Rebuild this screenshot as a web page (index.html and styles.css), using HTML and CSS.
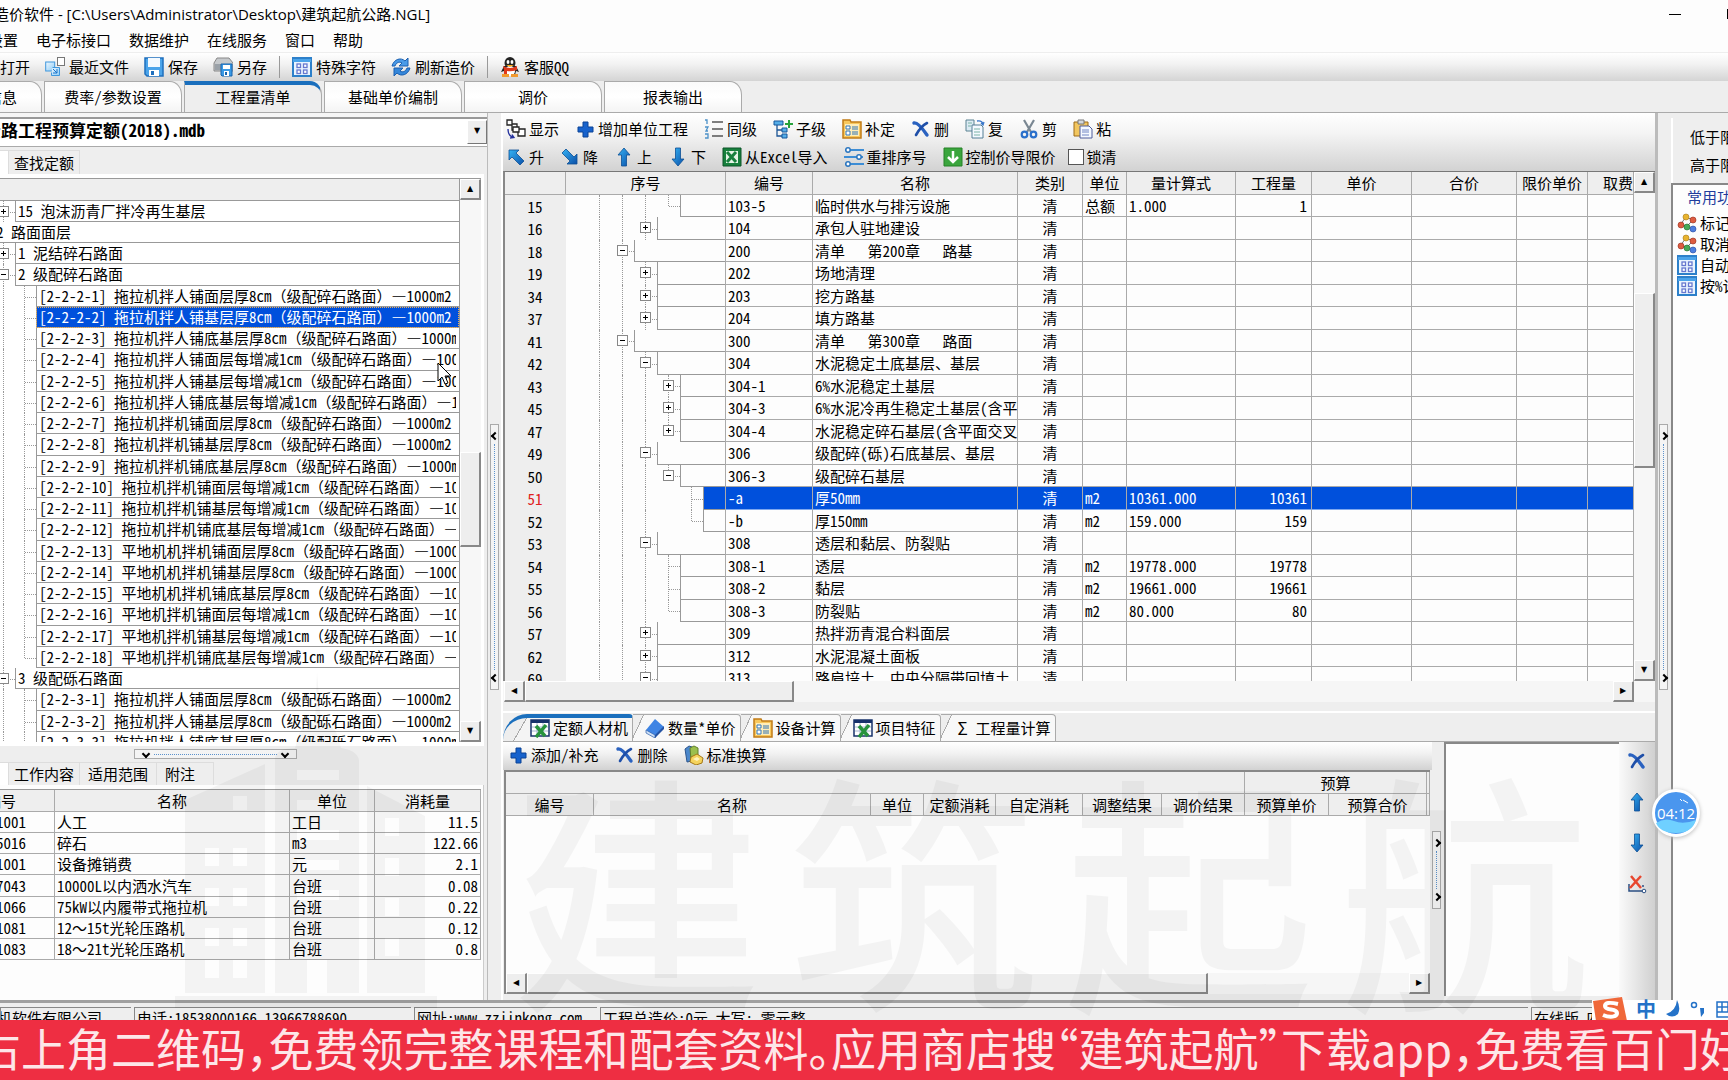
FILE: index.html
```html
<!DOCTYPE html>
<html lang="zh-CN">
<head>
<meta charset="utf-8">
<title>造价软件</title>
<link rel="stylesheet" href="styles.css">
</head>
<body>
<svg class="sprite" aria-hidden="true">
  <defs>
    <linearGradient id="blue" x1="0" y1="0" x2="1" y2="1"><stop offset="0" stop-color="#35b4f5"/><stop offset="1" stop-color="#0b4fa8"/></linearGradient>
    <linearGradient id="pale" x1="0" y1="0" x2="1" y2="1"><stop offset="0" stop-color="#eef8ff"/><stop offset="1" stop-color="#8ecbf5"/></linearGradient>
  </defs>
  <symbol id="recent" viewBox="0 0 20 20"><rect x="12.500" y=".5" width="7" height="8" fill="#fff" stroke="#777"/><rect x=".7" y="5" width="9" height="9" fill="url(#pale)" stroke="#3f97dd"/><path d="M7.500 10.500h7v8h-8v-3" fill="url(#pale)" stroke="#3f97dd"/><path d="M8 12l4 4m0-4v4h-4" stroke="#1a75cc" fill="none"/></symbol>
  <symbol id="save" viewBox="0 0 20 20"><path d="M1 1h18v18H3l-2-2z" fill="#4ba4ea" stroke="#1f6fbd" stroke-width="1.500"/><path d="M4 1h12v9H4z" fill="#f4faff"/><path d="M5 13h10v6H5z" fill="#fff"/><path d="M7 14h3v4H7z" fill="#1f6fbd"/></symbol>
  <symbol id="saveas" viewBox="0 0 20 20"><path d="M4 1h12l4 5v8H1V6z" fill="#c6c9cc" stroke="#888"/><path d="M2 7h16v6H2z" fill="#9aa1a8"/><path d="M8 7h11v12H9l-1-1z" fill="#3a9ae6" stroke="#1763ad"/><path d="M10 8h7v4h-7zM11 14h5v5h-5z" fill="#fff"/><path d="M12 15h2v3h-2z" fill="#1763ad"/></symbol>
  <symbol id="grid" viewBox="0 0 20 20"><path d="M1 1h18v18H1z" fill="#eaf5ff" stroke="#2d80ca" stroke-width="2"/><path d="M1 2h18v3H1z" fill="#4ba4ea"/><g fill="#fff" stroke="#6678cf" stroke-width="1.300"><rect x="5" y="7" width="3.500" height="3.500"/><rect x="11.500" y="7" width="3.500" height="3.500"/><rect x="5" y="13" width="3.500" height="3.500"/><rect x="11.500" y="13" width="3.500" height="3.500"/></g></symbol>
  <symbol id="refresh" viewBox="0 0 20 20"><path d="M1 9C3 2 10 0 14 4l3-3v8H8l3-3C8 4 5 6 4 9z" fill="#4a9be8" stroke="#1a5fb0"/><path d="M19 11c-2 7-9 9-13 5l-3 3v-8h9l-3 3c3 2 6 0 7-3z" fill="#3587da" stroke="#1a5fb0"/></symbol>
  <symbol id="qq" viewBox="0 0 20 20"><ellipse cx="10" cy="6" rx="5.500" ry="6" fill="#222"/><path d="M4 9L1 15l3-1 1 4h10l1-4 3 1-3-6z" fill="#222"/><ellipse cx="10" cy="14" rx="5" ry="5" fill="#fff"/><ellipse cx="8" cy="5" rx="1.400" ry="2" fill="#fff"/><ellipse cx="12" cy="5" rx="1.400" ry="2" fill="#fff"/><path d="M6 8h8l-4 2z" fill="#f7a614"/><path d="M3 9q7 4 14 0v4q-6 2-10 1v3H4v-4z" fill="#df3a1c"/><path d="M2 17h7v3H2zm9 0h7v3h-7z" fill="#f29a2e"/></symbol>
  <symbol id="show" viewBox="0 0 20 20"><g fill="#fff" stroke="#222" stroke-width="1.300"><path d="M1 1h5v5H1zM6 5h5v6H6zM12 10h7v7h-7z"/><path d="M7 8h6v5H7z"/></g><path d="M2 10q0 7 5 8m-3 1l4-.5-2-3" fill="none" stroke="#24319c" stroke-width="1.300"/></symbol>
  <symbol id="plus" viewBox="0 0 20 20"><path d="M8 3h5v5h5v5h-5v5H8v-5H3V8h5z" fill="#1762cc" stroke="#0a4296"/></symbol>
  <symbol id="list" viewBox="0 0 20 20"><path d="M8 3h11M8 10h11M8 17h11" stroke="#555" stroke-width="1.500"/><path d="M1 1h2v4M1 8h3L2 12h2M1 15h3v4H1" fill="none" stroke="#4c91c8" stroke-width="1.300"/></symbol>
  <symbol id="tree" viewBox="0 0 20 20"><path d="M4 5v12h7M4 11h7" fill="none" stroke="#1d5696" stroke-width="1.300"/><g fill="#55aee8" stroke="#17579b"><path d="M1 2h9v4H1zM9 9h5v4H9zM9 15h5v4H9z"/></g><path d="M15 1h2v3h3v2h-3v3h-2V6h-3V4h3z" fill="#28a23c"/></symbol>
  <symbol id="folder" viewBox="0 0 20 20"><path d="M1 1h7l1 2h10v16H1z" fill="#f8c85d" stroke="#c17b16" stroke-width="1.500"/><path d="M3 5h14v12H3z" fill="#ffedb8"/><path d="M4 7h4v3H4zm0 5h4v4H4z" fill="#fff" stroke="#3175b5"/><path d="M10 8h6m-6 2h6m-6 3h6m-6 2h6" stroke="#3175b5"/></symbol>
  <symbol id="del" viewBox="0 0 20 20"><path d="M3 4q4-1 13 12" fill="none" stroke="#2a62c0" stroke-width="3.400" stroke-linecap="round"/><path d="M16 4Q10 7 5 16" fill="none" stroke="#1f4fa8" stroke-width="2.600" stroke-linecap="round"/></symbol>
  <symbol id="copy" viewBox="0 0 20 20"><path d="M1 1h8v11H1z" fill="#dcebf4" stroke="#5b8292"/><path d="M7 6h9l2 2v11H7z" fill="#f4f9ff" stroke="#557f96"/><path d="M9 10h6m-6 3h6m-6 3h6M3 4h4M3 7h3" stroke="#7bb3a6"/><path d="M12 2q5-1 6 3m-2-1l2 2 1-3" fill="none" stroke="#3a78cb" stroke-width="1.300"/></symbol>
  <symbol id="cut" viewBox="0 0 20 20"><path d="M5 1l7 12M15 1L8 13" stroke="#7a8792" stroke-width="2.200"/><g fill="none" stroke="#2a70cb" stroke-width="2.200"><circle cx="5.500" cy="15.500" r="2.800"/><circle cx="14.500" cy="15.500" r="2.800"/></g></symbol>
  <symbol id="paste" viewBox="0 0 20 20"><path d="M1 3h14v14H1z" fill="#f2c65f" stroke="#9c6b19"/><path d="M5 1h6v4H5z" fill="#d4d8dc" stroke="#777"/><path d="M7 7h9l3 3v9H7z" fill="#f5f9ff" stroke="#4e5d9c"/><path d="M9 11h7m-7 2h7m-7 3h7" stroke="#7185c4"/></symbol>
  <symbol id="up" viewBox="0 0 20 20"><path d="M10 1l6 7h-3.500v11h-5V8H4z" fill="url(#blue)" stroke="#0c4f94" stroke-width=".8"/></symbol>
  <symbol id="down" viewBox="0 0 20 20"><path d="M10 19l6-7h-3.500V1h-5v11H4z" fill="url(#blue)" stroke="#0c4f94" stroke-width=".8"/></symbol>
  <symbol id="upleft" viewBox="0 0 20 20"><path d="M3 3h10L10 6l8 8-4 4-8-8-3 3z" fill="url(#blue)" stroke="#0c4f94" stroke-width=".8"/></symbol>
  <symbol id="downright" viewBox="0 0 20 20"><path d="M17 17H7l3-3-8-8 4-4 8 8 3-3z" fill="url(#blue)" stroke="#0c4f94" stroke-width=".8"/></symbol>
  <symbol id="excel" viewBox="0 0 20 20"><path d="M1 1h18v18H1z" fill="#17803d" stroke="#0d5528"/><path d="M4 4h12v12H4z" fill="#e4f4e6"/><path d="M5 5l9 10M14 5L5 15" stroke="#17803d" stroke-width="3"/></symbol>
  <symbol id="sheet" viewBox="0 0 20 20"><path d="M1 2h18v16H1z" fill="#fff" stroke="#17326b" stroke-width="1.500"/><path d="M1 2h18v3H1z" fill="#17326b"/><path d="M2 9h16M2 13h16M7 5v13M13 5v13" stroke="#a5b6cf"/><path d="M6 8l9 10M16 7L6 19" stroke="#27933c" stroke-width="3.500"/></symbol>
  <symbol id="sliders" viewBox="0 0 20 20"><path d="M1 3h19M0 10h19M1 17h19" stroke="#3d8dd5" stroke-width="2"/><g fill="#fff" stroke="#2b76bf" stroke-width="1.500"><circle cx="4" cy="3" r="2.200"/><circle cx="15" cy="10" r="2.200"/><circle cx="4" cy="17" r="2.200"/></g></symbol>
  <symbol id="green" viewBox="0 0 20 20"><path d="M1 1h18v18H1z" fill="#3aa53d" stroke="#248127"/><path d="M10 4v11M5 10l5 5 5-5" fill="none" stroke="#fff" stroke-width="2.500"/></symbol>
  <symbol id="book" viewBox="0 0 20 20"><path d="M1 12L10 1l9 8-9 11z" fill="#3e84e4"/><path d="M1 12v3l9 5v-3z" fill="#cfe0f6" stroke="#2b5eab" stroke-width=".7"/><path d="M10 17l9-9v3l-9 9z" fill="#2453a3"/></symbol>
  <symbol id="convert" viewBox="0 0 20 20"><path d="M1 4l4-3 3 1v14l-5 1z" fill="#4b87cb" stroke="#2d568e"/><path d="M6 3l4-2 4 2v12H7z" fill="#9bbf4d" stroke="#62802a"/><path d="M7 12l6-3 6 4-1 5-6 2-6-3z" fill="#f5d35c" stroke="#a47819"/><path d="M9 14l4-2 3 2-3 2z" fill="#fff3ba"/></symbol>
  <symbol id="redx" viewBox="0 0 20 20"><path d="M2 10v7h14m0-6v2" fill="none" stroke="#2b4f83" stroke-width="1.500"/><path d="M4 2l10 12M14 2L3 14" stroke="#e8472f" stroke-width="2.500"/><circle cx="17" cy="17" r="1.800" fill="#fff" stroke="#2b4f83"/></symbol>
  <symbol id="balls" viewBox="0 0 20 20"><path d="M9 4l7 3-6 6-7-1z" fill="none" stroke="#777"/><circle cx="9" cy="4" r="3" fill="#e8b32d" stroke="#a87b14" stroke-width=".6"/><circle cx="16" cy="7" r="3" fill="#dd5c41" stroke="#962a18" stroke-width=".6"/><circle cx="4" cy="12" r="3" fill="#dd5c41" stroke="#962a18" stroke-width=".6"/><circle cx="10" cy="14" r="3" fill="#47a957" stroke="#1d6b2a" stroke-width=".6"/><circle cx="16" cy="16" r="3" fill="#4c7ee0" stroke="#25479c" stroke-width=".6"/></symbol>
</svg>

<header>
  <div class="title"><span>造价软件 - [C:\Users\Administrator\Desktop\建筑起航公路.NGL]</span>
    <button class="min" aria-label="最小化"></button><button class="max" aria-label="最大化"></button></div>
  <nav class="menu"><button>设置</button><button>电子标接口</button><button>数据维护</button><button>在线服务</button><button>窗口</button><button>帮助</button></nav>
  <div class="toolbar">
    <button>打开</button>
    <button><svg><use href="#recent"/></svg>最近文件</button>
    <button><svg><use href="#save"/></svg>保存</button>
    <button><svg><use href="#saveas"/></svg>另存</button>
    <hr>
    <button><svg><use href="#grid"/></svg>特殊字符</button>
    <button><svg><use href="#refresh"/></svg>刷新造价</button>
    <hr>
    <button><svg><use href="#qq"/></svg>客服QQ</button>
  </div>
  <nav class="tabs"><button>项目信息</button><button>费率/参数设置</button><button class="on">工程量清单</button><button>基础单价编制</button><button>调价</button><button>报表输出</button></nav>
</header>

<main class="work">
  <section class="left">
    <div class="combo"><select aria-label="定额库"><option>公路工程预算定额(2018).mdb</option></select></div>
    <div class="subtabs find"><button class="on" aria-label="定额"></button><button>查找定额</button></div>
    <div class="treebox">
      <div class="treemain">
        <div class="treehead"></div>
        <ul class="quota">
          <li><i class="j"><button class="box plus" aria-label="展开"></button></i><span class="leaf"><span>15 泡沫沥青厂拌冷再生基层</span></span></li>
          <li class="root"><span class="leaf"><span>2 路面面层</span></span></li>
          <li><i class="j"><button class="box plus" aria-label="展开"></button></i><span class="leaf"><span>1 泥结碎石路面</span></span></li>
          <li><i class="j"><button class="box" aria-label="折叠"></button></i><span class="leaf"><span>2 级配碎石路面</span></span></li>
          <li><i class="g"></i><i class="j"></i><span class="leaf"><span>[2-2-2-1] 拖拉机拌人铺面层厚8cm<em>（级配碎石路面）—</em>1000m2</span></span></li>
          <li class="sel"><i class="g"></i><i class="j"></i><span class="leaf"><span>[2-2-2-2] 拖拉机拌人铺基层厚8cm<em>（级配碎石路面）—</em>1000m2</span></span></li>
          <li><i class="g"></i><i class="j"></i><span class="leaf"><span>[2-2-2-3] 拖拉机拌人铺底基层厚8cm<em>（级配碎石路面）—</em>1000m2</span></span></li>
          <li><i class="g"></i><i class="j"></i><span class="leaf"><span>[2-2-2-4] 拖拉机拌人铺面层每增减1cm<em>（级配碎石路面）—</em>1000m2</span></span></li>
          <li><i class="g"></i><i class="j"></i><span class="leaf"><span>[2-2-2-5] 拖拉机拌人铺基层每增减1cm<em>（级配碎石路面）—</em>1000m2</span></span></li>
          <li><i class="g"></i><i class="j"></i><span class="leaf"><span>[2-2-2-6] 拖拉机拌人铺底基层每增减1cm<em>（级配碎石路面）—</em>1000m2</span></span></li>
          <li><i class="g"></i><i class="j"></i><span class="leaf"><span>[2-2-2-7] 拖拉机拌机铺面层厚8cm<em>（级配碎石路面）—</em>1000m2</span></span></li>
          <li><i class="g"></i><i class="j"></i><span class="leaf"><span>[2-2-2-8] 拖拉机拌机铺基层厚8cm<em>（级配碎石路面）—</em>1000m2</span></span></li>
          <li><i class="g"></i><i class="j"></i><span class="leaf"><span>[2-2-2-9] 拖拉机拌机铺底基层厚8cm<em>（级配碎石路面）—</em>1000m2</span></span></li>
          <li><i class="g"></i><i class="j"></i><span class="leaf"><span>[2-2-2-10] 拖拉机拌机铺面层每增减1cm<em>（级配碎石路面）—</em>1000m2</span></span></li>
          <li><i class="g"></i><i class="j"></i><span class="leaf"><span>[2-2-2-11] 拖拉机拌机铺基层每增减1cm<em>（级配碎石路面）—</em>1000m2</span></span></li>
          <li><i class="g"></i><i class="j"></i><span class="leaf"><span>[2-2-2-12] 拖拉机拌机铺底基层每增减1cm<em>（级配碎石路面）—</em>1000m2</span></span></li>
          <li><i class="g"></i><i class="j"></i><span class="leaf"><span>[2-2-2-13] 平地机机拌机铺面层厚8cm<em>（级配碎石路面）—</em>1000m2</span></span></li>
          <li><i class="g"></i><i class="j"></i><span class="leaf"><span>[2-2-2-14] 平地机机拌机铺基层厚8cm<em>（级配碎石路面）—</em>1000m2</span></span></li>
          <li><i class="g"></i><i class="j"></i><span class="leaf"><span>[2-2-2-15] 平地机机拌机铺底基层厚8cm<em>（级配碎石路面）—</em>1000m2</span></span></li>
          <li><i class="g"></i><i class="j"></i><span class="leaf"><span>[2-2-2-16] 平地机拌机铺面层每增减1cm<em>（级配碎石路面）—</em>1000m2</span></span></li>
          <li><i class="g"></i><i class="j"></i><span class="leaf"><span>[2-2-2-17] 平地机拌机铺基层每增减1cm<em>（级配碎石路面）—</em>1000m2</span></span></li>
          <li><i class="g"></i><i class="j end"></i><span class="leaf"><span>[2-2-2-18] 平地机拌机铺底基层每增减1cm<em>（级配碎石路面）—</em>1000m2</span></span></li>
          <li><i class="j"><button class="box" aria-label="折叠"></button></i><span class="leaf"><span>3 级配砾石路面</span></span></li>
          <li><i class="g"></i><i class="j"></i><span class="leaf"><span>[2-2-3-1] 拖拉机拌人铺面层厚8cm<em>（级配砾石路面）—</em>1000m2</span></span></li>
          <li><i class="g"></i><i class="j"></i><span class="leaf"><span>[2-2-3-2] 拖拉机拌人铺基层厚8cm<em>（级配砾石路面）—</em>1000m2</span></span></li>
          <li><i class="g"></i><i class="j"></i><span class="leaf"><span>[2-2-3-3] 拖拉机拌人铺底基层厚8cm<em>（级配砾石路面）—</em>1000m2</span></span></li>
        </ul>
      </div>
      <div class="vscroll quotabar"><button class="arr" aria-label="向上">▲</button><i class="thumb"></i><button class="arr" aria-label="向下">▼</button></div>
    </div>
    <div class="hsplit"><button class="grip" aria-label="折叠面板"><i class="chev d"></i><i class="dots"></i><i class="chev d"></i></button></div>
    <div class="subtabs"><button class="on" aria-label="消耗量"></button><button>工作内容</button><button>适用范围</button><button class="wide">附注</button></div>
    <div class="usagebox">
      <table class="usage">
        <colgroup><col class="u1"><col><col class="u3"><col class="u4"></colgroup>
        <thead><tr><th>编号</th><th>名称</th><th>单位</th><th>消耗量</th></tr></thead>
        <tbody>
          <tr><td>1001</td><td>人工</td><td>工日</td><td>11.5</td></tr>
          <tr><td>5016</td><td>碎石</td><td>m3</td><td>122.66</td></tr>
          <tr><td>1001</td><td>设备摊销费</td><td>元</td><td>2.1</td></tr>
          <tr><td>7043</td><td>10000L以内洒水汽车</td><td>台班</td><td>0.08</td></tr>
          <tr><td>1066</td><td>75kW以内履带式拖拉机</td><td>台班</td><td>0.22</td></tr>
          <tr><td>1081</td><td>12<em>～</em>15t光轮压路机</td><td>台班</td><td>0.12</td></tr>
          <tr><td>1083</td><td>18<em>～</em>21t光轮压路机</td><td>台班</td><td>0.8</td></tr>
        </tbody>
      </table>
    </div>
  </section>

  <div class="vsplit"><button class="grip" aria-label="折叠左侧"><i class="chev l"></i><i class="dots"></i><i class="chev l"></i></button></div>

  <section class="center">
    <div class="tools">
      <div>
        <button><svg><use href="#show"/></svg>显示</button><button><svg><use href="#plus"/></svg>增加单位工程</button><button><svg><use href="#list"/></svg>同级</button><button><svg><use href="#tree"/></svg>子级</button><button><svg><use href="#folder"/></svg>补定</button><button><svg><use href="#del"/></svg>删</button><button><svg><use href="#copy"/></svg>复</button><button><svg><use href="#cut"/></svg>剪</button><button><svg><use href="#paste"/></svg>粘</button>
      </div>
      <div>
        <button><svg><use href="#upleft"/></svg>升</button><button><svg><use href="#downright"/></svg>降</button><button><svg><use href="#up"/></svg>上</button><button><svg><use href="#down"/></svg>下</button><button><svg><use href="#excel"/></svg>从Excel导入</button><button><svg><use href="#sliders"/></svg>重排序号</button><button><svg><use href="#green"/></svg>控制价导限价</button><label><input type="checkbox">锁清</label>
      </div>
    </div>
    <div class="gridbox">
      <div class="gridclip">
      <table class="bill">
        <colgroup><col class="c0"><col class="c1"><col class="c2"><col class="c3"><col class="c4"><col class="c5"><col class="c6"><col class="c7"><col class="c8"><col class="c9"><col class="c10"><col></colgroup>
        <thead><tr><th></th><th>序号</th><th>编号</th><th>名称</th><th>类别</th><th>单位</th><th>量计算式</th><th>工程量</th><th>单价</th><th>合价</th><th>限价单价</th><th class="fee">取费</th></tr></thead>
        <tbody>
          <tr><td>15<td><div class="tree"><i class="g"></i><i class="g"></i><i class="g"></i><i class="j end"></i><i class="leaf"></i></div><td>103-5<td>临时供水与排污设施<td>清<td>总额<td>1.000<td>1<td><td><td><td></tr>
          <tr><td>16<td><div class="tree"><i class="g"></i><i class="g"></i><i class="j"><button class="box plus" aria-label="展开"></button></i><i class="leaf"></i></div><td>104<td>承包人驻地建设<td>清<td><td><td><td><td><td><td></tr>
          <tr><td>18<td><div class="tree"><i class="g"></i><i class="j"><button class="box" aria-label="折叠"></button></i><i class="leaf"></i></div><td>200<td>清单&nbsp;&nbsp;&nbsp;第200章&nbsp;&nbsp;&nbsp;路基<td>清<td><td><td><td><td><td><td></tr>
          <tr><td>19<td><div class="tree"><i class="g"></i><i class="g"></i><i class="j"><button class="box plus" aria-label="展开"></button></i><i class="leaf"></i></div><td>202<td>场地清理<td>清<td><td><td><td><td><td><td></tr>
          <tr><td>34<td><div class="tree"><i class="g"></i><i class="g"></i><i class="j"><button class="box plus" aria-label="展开"></button></i><i class="leaf"></i></div><td>203<td>挖方路基<td>清<td><td><td><td><td><td><td></tr>
          <tr><td>37<td><div class="tree"><i class="g"></i><i class="g"></i><i class="j"><button class="box plus" aria-label="展开"></button></i><i class="leaf"></i></div><td>204<td>填方路基<td>清<td><td><td><td><td><td><td></tr>
          <tr><td>41<td><div class="tree"><i class="g"></i><i class="j"><button class="box" aria-label="折叠"></button></i><i class="leaf"></i></div><td>300<td>清单&nbsp;&nbsp;&nbsp;第300章&nbsp;&nbsp;&nbsp;路面<td>清<td><td><td><td><td><td><td></tr>
          <tr><td>42<td><div class="tree"><i class="g"></i><i class="g"></i><i class="j"><button class="box" aria-label="折叠"></button></i><i class="leaf"></i></div><td>304<td>水泥稳定土底基层、基层<td>清<td><td><td><td><td><td><td></tr>
          <tr><td>43<td><div class="tree"><i class="g"></i><i class="g"></i><i class="g"></i><i class="j"><button class="box plus" aria-label="展开"></button></i><i class="leaf"></i></div><td>304-1<td>6%水泥稳定土基层<td>清<td><td><td><td><td><td><td></tr>
          <tr><td>45<td><div class="tree"><i class="g"></i><i class="g"></i><i class="g"></i><i class="j"><button class="box plus" aria-label="展开"></button></i><i class="leaf"></i></div><td>304-3<td>6%水泥冷再生稳定土基层(含平<td>清<td><td><td><td><td><td><td></tr>
          <tr><td>47<td><div class="tree"><i class="g"></i><i class="g"></i><i class="g"></i><i class="j end"><button class="box plus" aria-label="展开"></button></i><i class="leaf"></i></div><td>304-4<td>水泥稳定碎石基层(含平面交叉<td>清<td><td><td><td><td><td><td></tr>
          <tr><td>49<td><div class="tree"><i class="g"></i><i class="g"></i><i class="j"><button class="box" aria-label="折叠"></button></i><i class="leaf"></i></div><td>306<td>级配碎(砾)石底基层、基层<td>清<td><td><td><td><td><td><td></tr>
          <tr><td>50<td><div class="tree"><i class="g"></i><i class="g"></i><i class="g"></i><i class="j end"><button class="box" aria-label="折叠"></button></i><i class="leaf"></i></div><td>306-3<td>级配碎石基层<td>清<td><td><td><td><td><td><td></tr>
          <tr class="sel"><td>51<td><div class="tree"><i class="g"></i><i class="g"></i><i class="g"></i><i class="g none"></i><i class="j"></i><i class="leaf"></i></div><td>-a<td>厚50mm<td>清<td>m2<td>10361.000<td>10361<td><td><td><td></tr>
          <tr><td>52<td><div class="tree"><i class="g"></i><i class="g"></i><i class="g"></i><i class="g none"></i><i class="j end"></i><i class="leaf"></i></div><td>-b<td>厚150mm<td>清<td>m2<td>159.000<td>159<td><td><td><td></tr>
          <tr><td>53<td><div class="tree"><i class="g"></i><i class="g"></i><i class="j"><button class="box" aria-label="折叠"></button></i><i class="leaf"></i></div><td>308<td>透层和黏层、防裂贴<td>清<td><td><td><td><td><td><td></tr>
          <tr><td>54<td><div class="tree"><i class="g"></i><i class="g"></i><i class="g"></i><i class="j"></i><i class="leaf"></i></div><td>308-1<td>透层<td>清<td>m2<td>19778.000<td>19778<td><td><td><td></tr>
          <tr><td>55<td><div class="tree"><i class="g"></i><i class="g"></i><i class="g"></i><i class="j"></i><i class="leaf"></i></div><td>308-2<td>黏层<td>清<td>m2<td>19661.000<td>19661<td><td><td><td></tr>
          <tr><td>56<td><div class="tree"><i class="g"></i><i class="g"></i><i class="g"></i><i class="j end"></i><i class="leaf"></i></div><td>308-3<td>防裂贴<td>清<td>m2<td>80.000<td>80<td><td><td><td></tr>
          <tr><td>57<td><div class="tree"><i class="g"></i><i class="g"></i><i class="j"><button class="box plus" aria-label="展开"></button></i><i class="leaf"></i></div><td>309<td>热拌沥青混合料面层<td>清<td><td><td><td><td><td><td></tr>
          <tr><td>62<td><div class="tree"><i class="g"></i><i class="g"></i><i class="j"><button class="box plus" aria-label="展开"></button></i><i class="leaf"></i></div><td>312<td>水泥混凝土面板<td>清<td><td><td><td><td><td><td></tr>
          <tr><td>69<td><div class="tree"><i class="g"></i><i class="g"></i><i class="j"><button class="box" aria-label="折叠"></button></i><i class="leaf"></i></div><td>313<td>路肩培土、中央分隔带回填土<td>清<td><td><td><td><td><td><td></tr>
        </tbody>
      </table>
      </div>
      <div class="vscroll billbar"><button class="arr" aria-label="向上">▲</button><i class="thumb"></i><button class="arr" aria-label="向下">▼</button></div>
    </div>
    <div class="hscroll wide"><button class="arr" aria-label="向左">◀</button><i class="thumb"></i><button class="arr" aria-label="向右">▶</button></div>

    <div class="detail">
      <nav class="dtabs">
        <button class="on"><svg><use href="#sheet"/></svg>定额人材机</button><button><svg><use href="#book"/></svg>数量*单价</button><button><svg><use href="#folder"/></svg>设备计算</button><button><svg><use href="#sheet"/></svg>项目特征</button><button><span class="sigma">Σ</span>工程量计算</button>
      </nav>
      <div class="drow">
        <div class="dmain">
          <div class="dtools"><button><svg><use href="#plus"/></svg>添加/补充</button><button><svg><use href="#del"/></svg>删除</button><button><svg><use href="#convert"/></svg>标准换算</button></div>
          <div class="dgrid">
            <table class="labor">
              <colgroup><col class="l1"><col><col class="l3"><col class="l4"><col class="l5"><col class="l6"><col class="l7"><col class="l8"><col class="l9"><col class="l10"></colgroup>
              <thead>
                <tr><th colspan="7"></th><th colspan="2">预算</th><th></th></tr>
                <tr><th>编号</th><th>名称</th><th>单位</th><th>定额消耗</th><th>自定消耗</th><th>调整结果</th><th>调价结果</th><th>预算单价</th><th>预算合价</th><th></th></tr>
              </thead>
            </table>
            <div class="hscroll"><button class="arr" aria-label="向左">◀</button><i class="thumb"></i><button class="arr" aria-label="向右">▶</button></div>
          </div>
        </div>
        <div class="dsplit"><button class="grip" aria-label="折叠右侧"><i class="chev r"></i><i class="dots"></i><i class="chev r"></i></button></div>
        <div class="note"></div>
        <div class="sidetools"><button aria-label="删除"><svg><use href="#del"/></svg></button><button aria-label="上移"><svg><use href="#up"/></svg></button><button aria-label="下移"><svg><use href="#down"/></svg></button><button aria-label="清除"><svg><use href="#redx"/></svg></button></div>
      </div>
    </div>
  </section>

  <div class="vsplit rightsplit"><button class="grip" aria-label="折叠右侧"><i class="chev r"></i><i class="dots"></i><i class="chev r"></i></button></div>

  <aside class="right">
    <div class="limits"><p>低于限价</p><p>高于限价</p></div>
    <div class="common">
      <h2>常用功能</h2>
      <button><svg><use href="#balls"/></svg>标记</button>
      <button><svg><use href="#balls"/></svg>取消</button>
      <button><svg><use href="#grid"/></svg>自动</button>
      <button><svg><use href="#grid"/></svg>按%计</button>
    </div>
  </aside>
</main>

<footer class="status"><span class="s1">机软件有限公司</span><span class="s2">电话:18538000166 13966788690</span><span class="s3">网址:www.zzjinkong.com</span><span class="s4">工程总造价:0元 大写: 零元整</span><span class="s5">在线版 四</span></footer>
<div class="banner">右上角二维码，免费领完整课程和配套资料。应用商店搜“建筑起航”下载app，免费看百门好课</div>

<div class="mark" aria-hidden="true">
  <svg viewBox="0 0 265 270"><path fill-rule="evenodd" d="M10 255V62l80-36v229zM100 255V20q2-10 20-10l4-14q4-10 16-12l2-50 4 50q12 2 16 12l4 14q16 2 18 12v233zM192 255V48l58 30v177zM30 110h14v18H30zM58 110h14v18H58zM58 58h14v14H58zM30 150h14v18H30zM58 150h14v18H58zM30 190h14v18H30zM58 190h14v18H58zM30 222h14v18H30zM58 222h14v18H58zM122 32h42v10h-42zM122 62h42v10h-42zM122 92h42v10h-42zM122 122h42v10h-42zM122 152h42v10h-42zM132 222h20v33h-20zM210 80h14v18h-14zM210 120h14v18h-14zM210 160h14v18h-14zM210 200h14v18h-14zM0 258h262v12H0z"/></svg>
  <span>建</span><span>筑</span><span>起</span><span>航</span>
</div>
<div class="timer">04:12<svg viewBox="0 0 42 42"><path d="M1 31q9-6 18-2t22-1q-4 13-20 13T1 31z" fill="#6fd0ff"/><path d="M25 7l2 2m1-1l5 3" stroke="#fff" fill="none"/></svg></div>
<div class="ime"><svg class="logo" viewBox="0 0 36 24"><path d="M1 4l29-4 5 24H4z" fill="#f0683a"/><path d="M26 7q-13-3-13 2c0 5 12 2 12 7 0 4-7 5-14 2" fill="none" stroke="#fff" stroke-width="4"/></svg><span>中</span><svg viewBox="0 0 18 20"><path d="M13 1q-1 11-11 14 6 5 12 0 3-6-1-14z" fill="#2472c8"/></svg><svg viewBox="0 0 18 20"><circle cx="4" cy="6" r="2.500" fill="none" stroke="#2472c8" stroke-width="1.500"/><path d="M10 9h4v5l-3 4" fill="#2472c8"/></svg><svg viewBox="0 0 18 20"><path d="M1 3h16v15H1zM1 8h16M6 3v10M12 3v10M1 13h16" fill="none" stroke="#2472c8" stroke-width="1.500"/></svg></div>
<svg class="cursor" viewBox="0 0 16 24" aria-hidden="true"><path d="M1 1v18l4-4 3 7 3-1-3-7h6z" fill="#fff" stroke="#000"/></svg>
</body>
</html>
```

FILE: styles.css
```css
* { box-sizing: border-box; }
body {
  margin: 0;
  min-height: 100vh;
  display: flex;
  flex-direction: column;
  position: relative;
  overflow: hidden;
  background: #eee;
  color: #000;
  font: 15px/20px "Noto Sans CJK SC", sans-serif;
  font-feature-settings: "hwid";
  text-spacing-trim: space-all;
  white-space: nowrap;
}
button, select, input { font: inherit; font-feature-settings: inherit; color: inherit; }
button { border: 0; padding: 0; background: none; white-space: nowrap; }
i { font-style: normal; flex: none; }
em { font-style: normal; font-feature-settings: normal; }
p, h2, ul { margin: 0; padding: 0; }
.sprite { position: absolute; width: 0; height: 0; }
button svg { width: 20px; height: 20px; flex: none; }

/* window header */
.title {
  height: 28px;
  display: flex;
  background: #fdfdfd;
  font: 15px/28px "Open Sans", "Noto Sans CJK SC", sans-serif;
  font-feature-settings: normal;
}
.title span { margin: 0 auto 0 -6px; }
.min { width: 52px; display: grid; place-items: center; }
.min::before { content: ""; width: 12px; height: 1px; background: #000; }
.max { width: 27px; overflow: hidden; display: flex; align-items: center; justify-content: flex-end; }
.max::before { content: ""; width: 1px; height: 10px; background: #000; }
.menu { height: 24px; display: flex; background: #fdfdfd; margin-left: -21px; }
.menu button { padding: 0 9px; }
.toolbar {
  height: 29px;
  display: flex;
  align-items: center;
  gap: 15px;
  background: linear-gradient(#fff, #f2f2f2 40%, #d4d4d4);
  border-top: 1px solid #eee;
}
.toolbar button { display: flex; gap: 4px; align-items: center; }
.toolbar hr { width: 1px; height: 22px; margin: 0 -3px; border: 0; background: #999; }
.tabs { height: 32px; display: flex; margin-left: -96px; border-bottom: 1px solid #aaa; }
.tabs button {
  width: 138px;
  margin-right: 2px;
  border: 1px solid #aaa;
  border-bottom: 0;
  border-top-right-radius: 12px 14px;
  background: linear-gradient(#fafafa, #fff 50%, #f4f4f4);
}
.tabs button:first-child { text-align: right; padding-right: 24px; }
.tabs .on { border-top: 4px solid #1a6fbd; background: #eee; line-height: 14px; padding-bottom: 4px; }

/* work area */
.work { flex: 1; display: flex; border-bottom: 3px solid #a0a0a0; }
.left { width: 488px; flex: none; display: flex; flex-direction: column; border-right: 1px solid #bbb; overflow: hidden; }
.combo { height: 34px; border-top: 4px solid #f6f6f6; border-bottom: 1px solid #aaa; background: #fff; padding-bottom: 2px; box-shadow: inset 0 2px #999; position: relative; display: flex; }
.combo select { flex: 1; margin: 1px 0 3px -16px; padding: 0; border: 0; background: none; appearance: none; font-size: 17px; font-weight: 700; }
.combo::after { content: "▼"; width: 18px; margin-top: 3px; font: 8px/20px "DejaVu Sans", sans-serif; text-align: center; background: #eee; border: 1px solid #888; border-color: #fff #777 #777 #fff; }
.subtabs { height: 23px; flex: none; display: flex; }
.subtabs.find { height: 27px; padding-top: 3px; }
.subtabs button { padding: 0 5px; border: 1px solid #ddd; border-bottom: 0; border-left: 0; min-width: 70px; }
.subtabs button:nth-child(n+3) { padding: 0 8px; }
.subtabs .on { width: 9px; min-width: 0; padding: 0; background: #fff; }
.subtabs .wide { min-width: 57px; text-align: left; }
.treebox { height: 572px; flex: none; display: flex; margin-right: 3px; padding: 4px 3px 4px 0; background: #fff; }
.treemain { flex: 1; min-width: 0; overflow: hidden; border-top: 1px solid #999; border-right: 1px solid #999; }
.treehead { height: 22px; background: #eee; border-bottom: 1px solid #999; }
.quota { list-style: none; }
.quota li { height: 21px; display: flex; padding-left: 3px; }
.quota li:nth-child(4n) { height: 22px; }
.quota .root { padding: 0; margin-left: -6px; }
.quota .root .leaf { border-left: 0; }
.quota .g { width: 21px; }
.quota .leaf { padding: 0 3px 0 2px; min-width: 0; }
.quota .leaf span { display: block; overflow: hidden; line-height: 20px; }
.quota .sel .leaf { background: #0050dc; color: #fff; outline: 1px dotted #e8b060; outline-offset: -1px; }
.g { width: 23px; border-left: 1px dotted #999; }
.none { border-color: transparent; }
.j { width: 12px; position: relative; border-left: 1px dotted #999; }
.j::before { content: ""; position: absolute; left: 0; top: 50%; width: 11px; border-top: 1px dotted #999; }
.j.end { border-left-color: transparent; }
.j.end::after { content: ""; position: absolute; left: -1px; top: 0; height: 50%; border-left: 1px dotted #999; }
.leaf { flex: 1; border-left: 1px solid #999; border-bottom: 1px solid #999; }
.box {
  position: absolute;
  z-index: 1;
  left: -6px;
  top: 5px;
  width: 11px;
  height: 11px;
  border: 1px solid #888;
  background: linear-gradient(#000, #000) center / 5px 1px no-repeat #fff;
}
.box.plus { background: linear-gradient(#000, #000) center / 5px 1px no-repeat, linear-gradient(#000, #000) center / 1px 5px no-repeat, #fff; }

/* scroll bars */
.arr { width: 21px; height: 21px; flex: none; background: #eee; border: solid; border-width: 1px 2px 2px 1px; border-color: #fff #888 #888 #fff; font: 8px/16px "DejaVu Sans", sans-serif; }
.thumb { display: block; background: #eee; border: solid; border-width: 1px 2px 2px 1px; border-color: #fff #888 #888 #fff; }
.vscroll { width: 21px; flex: none; display: flex; flex-direction: column; background: #f7f7f7; }
.vscroll .arr:last-child { margin-top: auto; }
.quotabar { border-top: 1px solid #999; }
.quotabar .thumb { height: 95px; margin-top: 252px; }
.billbar .thumb { height: 175px; margin-top: 100px; }
.hscroll { height: 21px; display: flex; background: #f6f6f6; }
.hscroll .arr:last-child { margin-left: auto; }
.hscroll .thumb { width: 681px; }
.hscroll.wide { padding: 0 21px 0 1px; }
.hscroll.wide .thumb { width: 269px; }

/* splitters */
.hsplit { height: 16px; flex: none; padding: 3px 0 3px 134px; }
.grip { display: flex; align-items: center; border: 1px solid #aaa; background: #f4f4f4; }
.hsplit .grip { width: 163px; height: 10px; padding: 0 8px; gap: 5px; }
.dots { flex: 1; }
.hsplit .dots { border-top: 1px dotted #5c92cc; }
.chev { width: 6px; height: 6px; border: solid #000; border-width: 0 2px 2px 0; }
.chev.d { transform: rotate(45deg); }
.chev.l { transform: rotate(135deg); }
.chev.r { transform: rotate(-45deg); }
.vsplit { width: 15px; flex: none; padding: 311px 4px 0 2px; border-right: 2px solid #fff; }
.vsplit .grip, .dsplit .grip { width: 9px; height: 266px; flex-direction: column; padding: 8px 0; gap: 5px; }
.vsplit .dots, .dsplit .dots { border-left: 1px dotted #5c92cc; }
.vsplit .chev, .dsplit .chev { width: 6px; height: 6px; }
.rightsplit { width: 13px; padding: 311px 3px 0 1px; border: 0; }

/* resource usage */
.usagebox { flex: 1; margin-right: 3px; padding: 4px 2px 0 0; background: #fdfdfd; border-right: 1px solid #ccc; }
table { table-layout: fixed; border-collapse: separate; border-spacing: 0; width: 100%; }
th { font-weight: 400; background: #eee; }
td, th { padding: 0; overflow: hidden; border-right: 1px solid #aaa; border-bottom: 1px solid #aaa; }
.usage { border-top: 1px solid #999; }
.usage th { height: 22px; }
.usage td { height: 21px; padding: 0 2px; }
.usage tr:nth-child(4) td { height: 22px; }
.usage td:first-child { text-indent: -6px; }
.usage th:first-child { text-indent: -14px; text-align: left; }
.usage td:last-child { text-align: right; }
.u1 { width: 55px; }
.u3 { width: 85px; }
.u4 { width: 106px; }

/* bill of quantities */
.center { flex: 1; min-width: 0; display: flex; flex-direction: column; border-right: 3px solid #bbb; }
.tools { height: 58px; padding-top: 2px; background: linear-gradient(#fff, #f4f4f4 35%, #d2d2d2); padding-left: 3px; }
.tools div { height: 28px; display: flex; gap: 16px; align-items: center; }
.tools button, .tools label, .dtools button, .dtabs button { display: flex; gap: 3px; align-items: center; }
.tools input { appearance: none; width: 16px; height: 16px; margin: 0; background: #fff; border: 1px solid #555; }
.tools label { margin-left: -4px; }
.gridbox { height: 510px; flex: none; display: flex; border-top: 1px solid #777; border-left: 2px solid #888; }
.gridclip { flex: 1; min-width: 0; overflow: hidden; background: #fdfdfd; }
.bill th { height: 23px; line-height: 20px; }
.bill tr { --row: 22px; }
.bill tr:nth-child(even) { --row: 23px; }
.bill td { height: var(--row); padding: 0 2px; line-height: 20px; }
.bill td:nth-child(1), .bill .sel td:nth-child(1) { background: #eee; border-color: #eee; text-align: center; padding-top: 2px; line-height: 18px; }
.bill td:nth-child(2) { border-bottom: 0; padding: 0; }
.bill td:nth-child(5) { text-align: center; }
.bill td:nth-child(8) { text-align: right; padding-right: 4px; }
.bill .fee { text-align: right; }
.bill .sel td:nth-child(n+2) { background: #0050dc; color: #fff; border-bottom-color: #7fa8ee; }
.bill .sel td:nth-child(1) { color: #e02020; }
.bill .sel td:nth-child(2) { background: none; }
.bill .sel .leaf { background: #0050dc; }
.tree { height: var(--row); display: flex; padding-left: 33px; }
.c0 { width: 61px; }
.c1 { width: 160px; }
.c2 { width: 87px; }
.c3 { width: 205px; }
.c4 { width: 65px; }
.c5 { width: 44px; }
.c6 { width: 109px; }
.c7 { width: 76px; }
.c8 { width: 100px; }
.c9 { width: 105px; }
.c10 { width: 71px; }

/* detail panel */
.detail { flex: 1; display: flex; flex-direction: column; margin-top: 9px; border-top: 2px solid #fff; }
.dtabs { height: 29px; display: flex; padding-top: 1px; border-bottom: 1px solid #aaa; }
.dtabs button { padding: 0 4px 0 12px; border-top: 1px solid #aaa; border-right: 1px solid #aaa; border-radius: 0 4px 0 0; background: linear-gradient(115deg, #eee 9px, #aaa 9px, #aaa 10px, #f8f8f8 10px); }
.dtabs button:first-child { padding-left: 27px; background: linear-gradient(120deg, #eee 20px, #aaa 20px, #aaa 21px, #f4f4f4 21px); border-top-left-radius: 24px 26px; }
.dtabs .on { border-top: 4px solid #1a6fbd; padding-bottom: 3px; }
.sigma { width: 20px; text-align: center; font-size: 17px; }
.drow { flex: 1; display: flex; }
.dmain { flex: 1; min-width: 0; display: flex; flex-direction: column; }
.dtools { height: 28px; display: flex; gap: 16px; padding: 0 0 2px 5px; background: linear-gradient(#fff, #f2f2f2 40%, #d2d2d2); }
.dgrid { flex: 1; display: flex; flex-direction: column; margin: 0 2px 6px 1px; border-top: 2px solid #888; border-left: 2px solid #888; background: #fdfdfd; }
.dgrid .hscroll { margin-top: auto; }
.labor th { height: 22px; line-height: 18px; }
.l1 { width: 88px; }
.l3 { width: 53px; }
.l4 { width: 72px; }
.l5 { width: 87px; }
.l6 { width: 79px; }
.l7 { width: 83px; }
.l8 { width: 84px; }
.l9 { width: 98px; }
.l10 { width: 3px; }
.dsplit { width: 12px; padding: 89px 2px 0 0; }
.dsplit .grip { height: 78px; }
.note { width: 175px; margin-bottom: 4px; border: solid #888; border-width: 2px 0 0 2px; background: #fdfdfd; }
.sidetools { width: 36px; display: flex; flex-direction: column; align-items: center; padding-top: 9px; gap: 21px; background: linear-gradient(90deg, #fafafa, #d0d0d0); }
.sidetools button { height: 20px; }

/* right panel */
.right { width: 57px; overflow: hidden; display: flex; flex-direction: column; padding-top: 5px; }
.limits { height: 65px; padding: 5px 0 0 17px; border-left: 2px solid #fff; }
.limits p { height: 28px; line-height: 28px; }
.common { flex: 1; padding: 1px 0 0 4px; background: #fdfdfd; border: solid #888; border-width: 2px 0 0 2px; }
.common h2 { margin-left: 10px; font-size: 15px; font-weight: 400; line-height: 22px; color: #1f3c9c; }
.common button { height: 21px; display: flex; align-items: center; gap: 3px; }
.common h2 + button { margin-top: 4px; }

/* status bar and ticker */
.status { height: 17px; display: flex; gap: 3px; padding-top: 4px; overflow: hidden; }
.status span { padding-left: 2px; overflow: hidden; border: solid #888; border-width: 1px 0 0 1px; }
.status .s1 { width: 131px; text-indent: -6px; }
.s2 { width: 277px; }
.s3 { width: 183px; }
.s4 { flex: 1; }
.s5 { width: 197px; }
.banner {
  height: 60px;
  overflow: hidden;
  background: #ee2e42;
  color: #fde6e8;
  font-size: 45px;
  line-height: 56px;
  text-indent: -24px;
  font-feature-settings: "halt";
}

/* overlays */
.mark { position: absolute; left: 175px; bottom: 72px; display: flex; align-items: flex-end; gap: 26px; pointer-events: none; color: rgba(0, 0, 0, .04); font-size: 250px; font-weight: 500; line-height: 250px; }
.mark svg { width: 265px; height: 270px; margin-right: 46px; fill: currentColor; overflow: visible; }
.timer { position: absolute; z-index: 1; right: 28px; bottom: 243px; width: 48px; height: 48px; border: 3px solid #fff; border-radius: 50%; background: #4a96ee; box-shadow: 0 1px 4px #bbb; color: #fff; font: 15px/42px "Open Sans", sans-serif; text-align: center; }
.timer svg { position: absolute; left: 0; top: 0; z-index: -1; }
.ime { position: absolute; right: 0; bottom: 60px; width: 136px; height: 23px; display: flex; align-items: center; gap: 8px; overflow: hidden; background: linear-gradient(transparent 3px, #fff 3px); color: #2472c8; font-size: 20px; font-weight: 700; }
.ime svg { width: 18px; height: 20px; flex: none; }
.ime .logo { width: 36px; height: 24px; }
.cursor { position: absolute; left: 437px; top: 362px; width: 16px; height: 24px; }
```
